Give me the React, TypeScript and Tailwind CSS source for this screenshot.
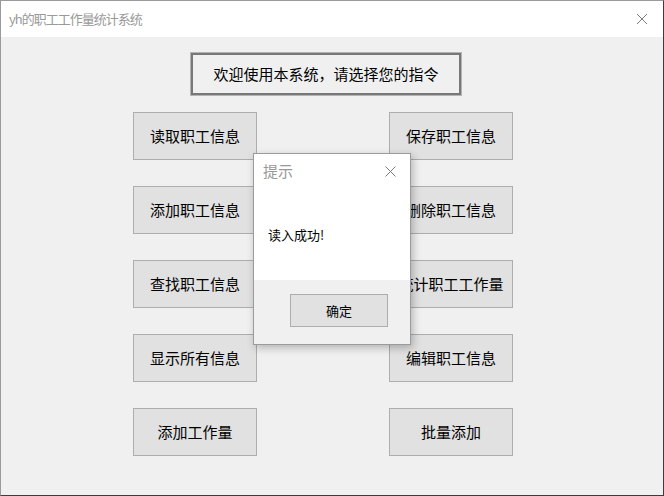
import React from 'react';

const leftButtons = ['读取职工信息', '添加职工信息', '查找职工信息', '显示所有信息', '添加工作量'];
const rightButtons = ['保存职工信息', '删除职工信息', '统计职工工作量', '编辑职工信息', '批量添加'];

const font = { fontFamily: '"Noto Sans CJK SC", "Liberation Sans", sans-serif' };

const Btn: React.FC<{ label: string }> = ({ label }) => (
  <div className="w-[124px] h-[48px] flex items-center justify-center bg-[#e1e1e1] border border-[#adadad] text-[15px] text-black">
    {label}
  </div>
);

export default function App() {
  return (
    <div
      className="relative w-[664px] h-[496px] bg-[#f0f0f0] border-l border-t border-[#9a9a9a] border-r border-r-[#3c3c3c] border-b border-b-[#3c3c3c] overflow-hidden flex flex-col"
      style={font}
    >
      {/* title bar */}
      <div className="h-[36px] bg-white flex items-center justify-between pl-[8px] pr-[14px] shrink-0">
        <span className="text-[13px] text-[#999999] tracking-[-1px]">yh的职工工作量统计系统</span>
        <svg width="12" height="12" viewBox="0 0 12 12" className="mr-[1px]">
          <path d="M1 1 L11 11 M11 1 L1 11" stroke="#7a7a7a" strokeWidth="1" />
        </svg>
      </div>

      {/* content */}
      <div className="flex flex-col items-start pt-[15px] pl-[132px]">
        <div className="border border-[#b4b4b4] ml-[57px]">
          <div className="w-[270px] h-[42px] border-2 border-[#787878] bg-[#f0f0f0] flex items-center justify-center text-[15px] text-black">
            欢迎使用本系统，请选择您的指令
          </div>
        </div>

        <div className="flex gap-[132px] mt-[16px]">
          <div className="flex flex-col gap-[26px]">
            {leftButtons.map((b) => (
              <Btn key={b} label={b} />
            ))}
          </div>
          <div className="flex flex-col gap-[26px]">
            {rightButtons.map((b) => (
              <Btn key={b} label={b} />
            ))}
          </div>
        </div>
      </div>

      {/* message box */}
      <div className="absolute left-[252px] top-[152px] w-[158px] h-[192px] border border-[#9b9b9b] bg-[#f0f0f0] shadow-[2px_3px_8px_rgba(0,0,0,0.25)] flex flex-col">
        <div className="bg-white h-[126px] flex flex-col">
          <div className="flex items-center justify-between pl-[9px] pr-[14px] h-[34px]">
            <span className="text-[15px] text-[#999999]">提示</span>
            <svg width="11" height="11" viewBox="0 0 11 11">
              <path d="M0.5 0.5 L10.5 10.5 M10.5 0.5 L0.5 10.5" stroke="#7a7a7a" strokeWidth="1" />
            </svg>
          </div>
          <div className="pl-[14px] pt-[37px] text-[13px] text-black">读入成功!</div>
        </div>
        <div className="flex justify-center pt-[14px] pl-[14px]">
          <div className="w-[98px] h-[33px] bg-[#e1e1e1] border border-[#adadad] flex items-center justify-center text-[13px] text-black">
            确定
          </div>
        </div>
      </div>
    </div>
  );
}
